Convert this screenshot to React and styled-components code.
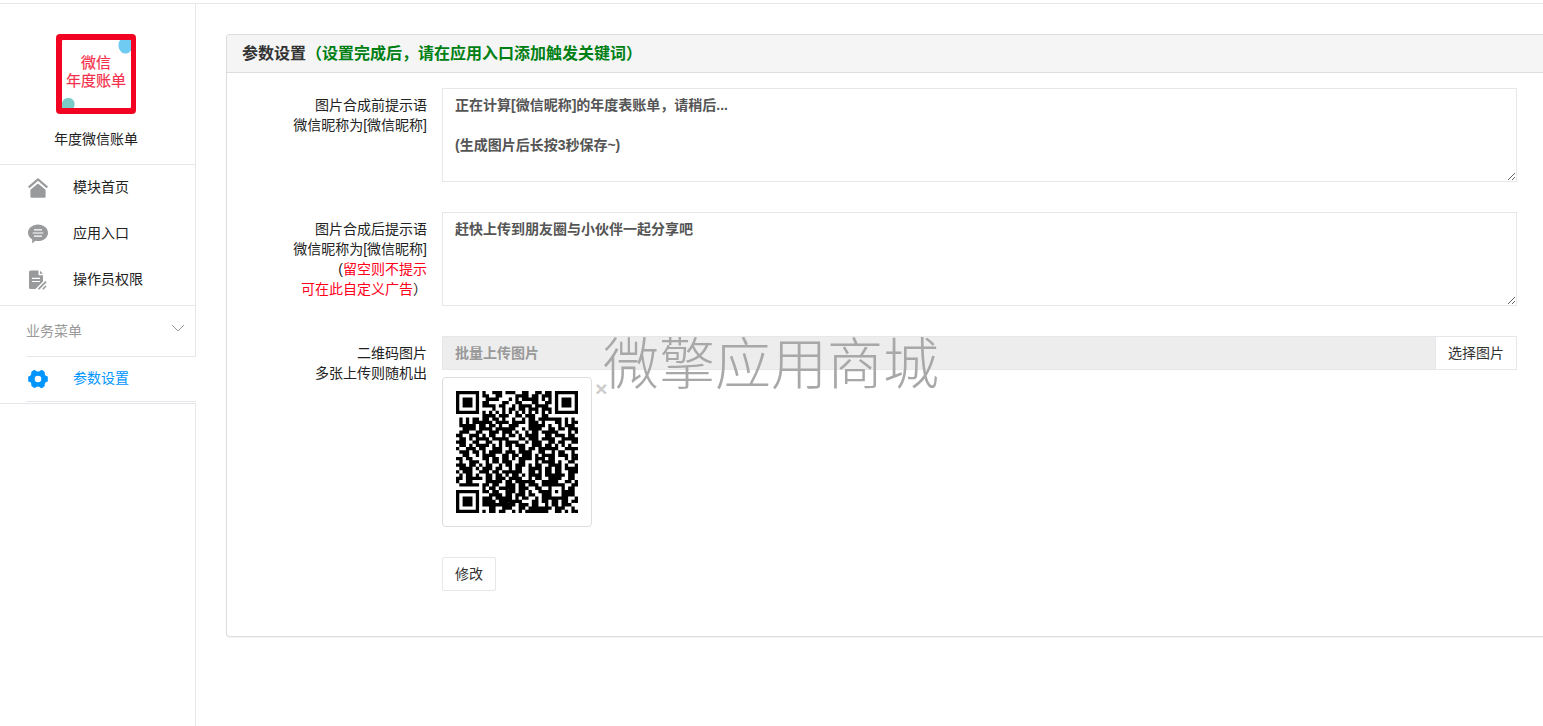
import styled, { createGlobalStyle } from "styled-components";

const qr = [
    '#######.#..###.###..##..##.##.#######',
    '#.....#.##..##....####.##.###.#.....#',
    '#.###.#..####...#.#.#####.#.#.#.###.#',
    '#.###.#.##....##..##...##..##.#.###.#',
    '#.###.#.####.##..#.####.####..#.###.#',
    '#.....#....#..#.##.##.###.###.#.....#',
    '#######.#.#.#.#.#.#.#.#.#.#.#.#######',
    '........####.###..##.###..##.........',
    '.#.#.##.##.##.#..#..#.##.#######.#.#.',
    '.#.#.######.####.####.###.#...##.#.##',
    '.#####.##.##.#..###...#####.#..#.###.',
    '..####.####.######..#.####..##.##.###',
    '.###..##..###.###.#..#.##.#####...#.#',
    '##..###.#.##..#.##.#.####..##.###.##.',
    '.##.#.####.#####...##.###.####..#####',
    '###..##..##..#.####..#.###..##.##..##',
    '.##.#.####.#.#.##.###..###.##.#.#.#..',
    '#..###.##..###..#..##.##.######..####',
    '.###.##.#.####.###.####..##..#.##..#.',
    '..##..#.####..##.##.###.#.####.###.##',
    '##.##...##.##.##.#.####.###.##...#.##',
    '.#..###..#.##.###..##...#.####.#..##.',
    '###.##.#.##..#.##.###.#.##..####.#..#',
    '.####.#.###.##..#.##..####.##.##.####',
    '#.###..###.##.######..##.#.##.##..###',
    '.#.##.#..##.##.#.##.#.####.######.##.',
    '##.#####.##.###.####..#.##..####..##.',
    '#..##....#####.##.######..#####..##.#',
    '.######.##.##..###.##.###.#######..##',
    '........#.##.#####.###..##..#...#.##.',
    '#######.##.##..###.##.#..####.#.####.',
    '#.....#...####.##.###.##..###...####.',
    '#.###.#.###.#####.#.##..#.########..#',
    '#.###.#.####.#######...##.##.##.##.##',
    '#.###.#.##########.###.##..#.##.###..',
    '#.....#...##..###..##.#######.###..#.',
    '#######.#.##.##..#.#.#######..##.#.##',
];

// one path for the whole code, so that neighbouring modules join without a seam
const qrPath = qr
    .map((row, y) => row.split('').map((cell, x) => (cell === '#' ? `M${x} ${y}h1v1h-1z` : '')).join(''))
    .join('');

const shortcuts = [
    { title: '模块首页', icon: <HomeIcon /> },
    { title: '应用入口', icon: <ChatIcon /> },
    { title: '操作员权限', icon: <PermissionIcon /> },
];

function HomeIcon() {
    return (
        <svg width="20" height="20" viewBox="0 0 20 20">
            <path d="M10 5.400 17.600 11.800v6.600q0 1.400-1.400 1.400H3.800q-1.400 0-1.400-1.400V11.800z" fill="currentColor" />
            <path d="M.7 9.400 10 1.500l9.300 7.900" fill="none" stroke="currentColor" strokeWidth="2.200" />
        </svg>
    )
}

function ChatIcon() {
    return (
        <svg width="20" height="20" viewBox="0 0 20 20">
            <path d="M10 .5c5.600 0 10 3.600 10 8.300s-4.400 8.300-10 8.300q-1.400 0-2.600-.3L4.200 19.600v-4.200C1.600 13.900 0 11.500 0 8.800 0 4.100 4.400.5 10 .5z" fill="currentColor" />
            <path d="M6 5.800h8M4.700 9h10.600M6 12.200h8" stroke="#fff" strokeWidth="1.200" />
        </svg>
    )
}

function PermissionIcon() {
    return (
        <svg width="20" height="20" viewBox="0 0 20 20">
            <path d="M2.500.5H10.500V5.300H15v6.200L7.500 19h-5Q1 19 1 17.500V2Q1 .5 2.500.5z" fill="currentColor" />
            <path d="m12 .8 3 2.900h-3z" fill="currentColor" />
            <path d="M4 8.300h8M4 11.500h8" stroke="#fff" strokeWidth="1.200" />
            <path d="m10.500 19.200 7.500-7.500" stroke="currentColor" strokeWidth="1.800" />
            <path d="m14.800 19.200 3.200-3.200" stroke="currentColor" strokeWidth="1.600" />
        </svg>
    )
}

function GearIcon() {
    return (
        <svg width="20" height="20" viewBox="0 0 20 20">
            <path
                d="M5.300 1.300 7 1q1.200 1.500 3 1.500T13 1l1.700.3 2 1.700q-.2 2.200.6 3.200.7.9 2.500 1.200v5.200q-1.800.3-2.500 1.200-.8 1-.6 3.200l-2 1.700-1.700.5q-1.200-1.700-3-1.700T7 19l-1.700-.5-2-1.700q.2-2.200-.6-3.200-.7-.9-2.500-1.200V7.400q1.800-.3 2.500-1.200.8-1 .6-3.200zM10 6.700a3.300 3.300 0 1 0 0 6.600 3.300 3.300 0 0 0 0-6.600z"
                fill="currentColor"
                fillRule="evenodd"
            />
        </svg>
    )
}

function Logo() {
    return (
        <svg width="80" height="80" viewBox="0 0 80 80">
            <rect width="80" height="80" rx="4" fill="#f30322" />
            <rect x="6" y="6" width="69" height="68" rx="1" fill="#fff" />
            <path d="M64 6H75v10.500A5.500 6.500 0 0 1 64 6z" fill="#70cbf2" />
            <path d="M6 69a6.300 5.600 0 0 1 12.600 1q0 2.500-1 4H6z" fill="#7bcbc7" />
            <LogoText x="40" y="34">微信</LogoText>
            <LogoText x="40" y="52">年度账单</LogoText>
        </svg>
    )
}

function QrCode() {
    return (
        <svg width="122" height="122" viewBox="0 0 37 37" role="img" aria-label="二维码">
            <path d={qrPath} />
        </svg>
    )
}

export default function App() {
    return (
        <>
            <GlobalStyle />
            <Page>
                <Sidebar>
                    <AppInfo>
                        <Logo />
                        <AppName>年度微信账单</AppName>
                    </AppInfo>
                    <Shortcuts>
                        {shortcuts.map((item) => (
                            <MenuLink href="#" key={item.title}>
                                {item.icon}
                                <MenuText>{item.title}</MenuText>
                            </MenuLink>
                        ))}
                    </Shortcuts>
                    <MenuToggle type="button">
                        <span>业务菜单</span>
                        <Chevron width="14" height="8" viewBox="0 0 14 8">
                            <path d="m1 1 6 6 6-6" fill="none" stroke="currentColor" />
                        </Chevron>
                    </MenuToggle>
                    <ActiveItem>
                        <MenuLink href="#" $active>
                            <GearIcon />
                            <MenuText>参数设置</MenuText>
                        </MenuLink>
                    </ActiveItem>
                    <SidebarRest />
                </Sidebar>
                <Main>
                    <Panel>
                        <PanelHeading>
                            参数设置<Hint>（设置完成后，请在应用入口添加触发关键词）</Hint>
                        </PanelHeading>
                        <Form onSubmit={(e) => e.preventDefault()}>
                            <Row>
                                <Label htmlFor="before">
                                    图片合成前提示语<br />微信昵称为[微信昵称]
                                </Label>
                                <TextArea
                                    id="before"
                                    defaultValue={'正在计算[微信昵称]的年度表账单，请稍后...\n\n(生成图片后长按3秒保存~)'}
                                />
                            </Row>
                            <Row>
                                <Label htmlFor="after">
                                    图片合成后提示语<br />微信昵称为[微信昵称]<br />
                                    (<Red>留空则不提示<br />可在此自定义广告</Red>）
                                </Label>
                                <TextArea id="after" defaultValue="赶快上传到朋友圈与小伙伴一起分享吧" />
                            </Row>
                            <Row>
                                <Label htmlFor="qrcode">
                                    二维码图片<br />多张上传则随机出
                                </Label>
                                <Upload>
                                    <InputGroup>
                                        <UploadInput id="qrcode" placeholder="批量上传图片" readOnly />
                                        <Button type="button">选择图片</Button>
                                    </InputGroup>
                                    <Thumb>
                                        <QrCode />
                                        <Remove type="button" aria-label="删除">×</Remove>
                                    </Thumb>
                                    <Watermark>微擎应用商城</Watermark>
                                </Upload>
                            </Row>
                            <Actions>
                                <Button type="submit" $rounded>修改</Button>
                            </Actions>
                        </Form>
                    </Panel>
                </Main>
            </Page>
        </>
    )
}

const GlobalStyle = createGlobalStyle`
    * {
        box-sizing: border-box;
    }
    body {
        margin: 0;
        background: #fff;
        color: #333;
        font: 14px/20px "Liberation Sans", "Noto Sans CJK SC", sans-serif;
    }
    button, input, textarea {
        font: inherit;
    }
`

const Page = styled.div`
    display: flex;
    min-height: 100vh;
    padding-top: 3px;
    overflow: hidden;
    background: linear-gradient(#e7e7eb, #e7e7eb) 0 3px / 100% 1px no-repeat;
`

const Sidebar = styled.aside`
    display: flex;
    flex-direction: column;
    flex: none;
    width: 196px;
    padding-top: 1px;
`

const AppInfo = styled.div`
    display: flex;
    flex-direction: column;
    align-items: center;
    gap: 15px;
    padding: 30px 3px 15px 0;
    border-right: 1px solid #e7e7eb;
    border-bottom: 1px solid #e7e7eb;
`

const AppName = styled.div`
    color: #222;
`

const LogoText = styled.text`
    fill: #f5304a;
    stroke: #f5304a;
    stroke-width: 0.2px;
    font-size: 15px;
    text-anchor: middle;
`

const Shortcuts = styled.nav`
    padding-bottom: 2px;
    border-right: 1px solid #e7e7eb;
    border-bottom: 1px solid #e7e7eb;
`

const MenuLink = styled.a`
    display: flex;
    align-items: center;
    gap: 25px;
    height: ${(p) => (p.$active ? '44px' : '46px')};
    padding-left: ${(p) => (p.$active ? '2px' : '28px')};
    color: ${(p) => (p.$active ? '#0095ff' : '#222')};
    text-decoration: none;

    svg {
        color: ${(p) => (p.$active ? '#0095ff' : '#989a9c')};
    }
`

const MenuText = styled.span`
    padding-bottom: 2px;
`

const MenuToggle = styled.button`
    display: flex;
    align-items: center;
    justify-content: space-between;
    height: 51px;
    margin-left: 26px;
    padding: 0 10px 0 0;
    border: 0;
    border-right: 1px solid #e7e7eb;
    border-bottom: 1px solid #e7e7eb;
    background: none;
    color: #999;
`

const Chevron = styled.svg`
    margin-bottom: 6px;
`

const ActiveItem = styled.div`
    margin-left: 26px;
    border-bottom: 1px solid #e7e7eb;
`

const SidebarRest = styled.div`
    flex: 1;
    margin-top: 1px;
    border-top: 1px solid #e7e7eb;
    border-right: 1px solid #e7e7eb;
`

const Main = styled.main`
    flex: 1;
    min-width: 0;
    padding: 31px 0 30px 30px;
`

const Panel = styled.section`
    border: 1px solid #ddd;
    border-right: 0;
    border-radius: 4px 0 0 4px;
    box-shadow: 0 1px 1px rgba(0, 0, 0, 0.05);
`

const PanelHeading = styled.h1`
    margin: 0;
    padding: 9px 15px 8px;
    border-bottom: 1px solid #ddd;
    border-top-left-radius: 3px;
    background: #f5f5f5;
    font-size: 16px;
    font-weight: 700;
    line-height: 20px;
`

const Hint = styled.span`
    color: #008014;
`

const Form = styled.form`
    display: flex;
    flex-direction: column;
    gap: 30px;
    padding: 15px 26px 45px 15px;
`

const Row = styled.div`
    display: flex;
    gap: 15px;
`

const Label = styled.label`
    flex: none;
    width: 185px;
    padding-top: 7px;
    color: #222;
    text-align: right;
`

const Red = styled.span`
    color: #ff001a;
`

const TextArea = styled.textarea`
    flex: 1;
    height: 94px;
    padding: 6px 12px;
    border: 1px solid #e7e7eb;
    outline: 0;
    color: #555;
    font-weight: 700;
    resize: vertical;
`

const Upload = styled.div`
    position: relative;
    flex: 1;
`

const InputGroup = styled.div`
    display: flex;
`

const UploadInput = styled.input`
    flex: 1;
    min-width: 0;
    height: 34px;
    padding: 6px 12px;
    border: 1px solid #e7e7eb;
    border-right: 0;
    outline: 0;
    background: #ededed;
    font-weight: 700;

    &::placeholder {
        color: #999;
    }
`

const Button = styled.button`
    height: 34px;
    padding: 6px 12px;
    border: 1px solid #e7e7eb;
    border-radius: ${(p) => (p.$rounded ? '2px' : '0')};
    background: #fff;
    color: #333;
`

const Thumb = styled.div`
    position: relative;
    display: flex;
    align-items: center;
    justify-content: center;
    width: 150px;
    height: 150px;
    margin-top: 7px;
    border: 1px solid #ddd;
    border-radius: 4px;
`

const Remove = styled.button`
    position: absolute;
    top: 1px;
    right: -16px;
    padding: 0;
    border: 0;
    background: none;
    color: #ccc;
    font-size: 21px;
    font-style: italic;
    font-weight: 700;
    line-height: 20px;
`

const Watermark = styled.div`
    position: absolute;
    top: -6px;
    left: 161px;
    color: #a8a8a8;
    font-family: "Noto Sans CJK SC", sans-serif;
    font-size: 56px;
    font-weight: 300;
    line-height: 60px;
    white-space: nowrap;
    pointer-events: none;
`

const Actions = styled.div`
    padding-left: 200px;
`
